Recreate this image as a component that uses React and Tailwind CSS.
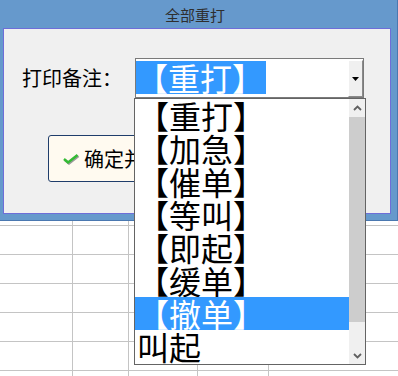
import React from "react";

const items = ["【重打】", "【加急】", "【催单】", "【等叫】", "【即起】", "【缓单】", "【撤单】", "叫起"];

function Chevron({ up }) {
  return (
    <svg width="9" height="6" viewBox="0 0 9 6">
      {up ? (
        <polyline points="1,5 4.5,1.5 8,5" fill="none" stroke="#606060" strokeWidth="1.8" />
      ) : (
        <polyline points="1,1 4.5,4.5 8,1" fill="none" stroke="#606060" strokeWidth="1.8" />
      )}
    </svg>
  );
}

function GridRow({ h, top }) {
  const cols = ["w-[73px]", "w-[56px]", "w-[69px]", "w-[71px]"];
  return (
    <div className={`flex ${h} ${top ? "border-t border-[#c4c4c4]" : ""}`}>
      {cols.map((c, i) => (
        <div key={i} className={`${c} h-full border-r border-[#c4c4c4]`} />
      ))}
    </div>
  );
}

export default function App() {
  return (
    <div className="relative w-[398px] h-[376px] overflow-hidden bg-white font-['Noto_Sans_CJK_SC',sans-serif] text-black">
      {/* dialog window */}
      <div className="bg-[#6699cc] pl-[3px] pr-[6px] pb-[6px] border-r border-b border-[#4a78b0]">
        <div className="h-[28px] flex items-center justify-center pr-[4px] text-[15px] leading-none text-[#2e2e2e]">
          全部重打
        </div>
        <div className="h-[186px] border border-[#6e6ed8] bg-[#f0f0f0] pt-[29px]">
          <div className="flex items-center pl-[18px]">
            <div className="w-[113px] text-[20px] leading-none whitespace-nowrap">打印备注：</div>
            <div className="w-[229px] h-[40px] border border-[#7a7a7a] bg-white flex items-start">
              <div className="mt-[2px] flex-1">
                <span className="inline-block h-[33px] bg-[#3399ff] text-white text-[32px] leading-[33px] pr-[2px] whitespace-nowrap">
                  【重打】
                </span>
              </div>
              <div className="w-[15px] h-[37px] mt-[1px] mr-[0px] bg-[#f0f0f0] border-l border-t border-l-white border-t-white border-r border-b border-r-[#8a8a8a] border-b-[#8a8a8a] flex items-center justify-center">
                <svg width="7" height="4" viewBox="0 0 7 4">
                  <polygon points="0,0 7,0 3.5,4" fill="#000" />
                </svg>
              </div>
            </div>
          </div>
          <div className="mt-[37px] ml-[44px] w-[160px] h-[47px] border border-[#1f3d6b] rounded-[3px] bg-[#fffaf0] flex items-center pl-[14px] gap-[4px]">
            <svg width="17" height="12" viewBox="0 0 17 12">
              <polyline points="2,7 6,10.5 15.5,3" fill="none" stroke="#9a9a9a" strokeWidth="2.4" />
              <polyline points="1,6 5,9.5 14.5,2" fill="none" stroke="#33bb33" strokeWidth="2.4" />
            </svg>
            <span className="text-[20px] leading-none whitespace-nowrap">确定并打印</span>
          </div>
        </div>
      </div>

      {/* spreadsheet grid */}
      <div>
        <GridRow h="h-[4px]" />
        <GridRow h="h-[29px]" top />
        <GridRow h="h-[29px]" top />
        <GridRow h="h-[29px]" top />
        <GridRow h="h-[29px]" top />
        <GridRow h="h-[29px]" top />
        <GridRow h="h-[6px]" top />
      </div>

      {/* dropdown list overlay */}
      <div className="absolute left-[134px] top-[98px] w-[232px] h-[267px] border border-[#646464] bg-white flex">
        <div className="w-[214px] flex flex-col">
          {items.map((t, i) => (
            <div
              key={i}
              className={`h-[33px] text-[32px] leading-[33px] pl-[2px] whitespace-nowrap ${
                i === 6 ? "bg-[#3399ff] text-white" : "text-black"
              }`}
            >
              {t}
            </div>
          ))}
        </div>
        <div className="w-[16px] bg-[#f0f0f0] flex flex-col">
          <div className="h-[18px] flex items-center justify-center">
            <Chevron up />
          </div>
          <div className="h-[205px] bg-[#cdcdcd]" />
          <div className="flex-1" />
          <div className="h-[17px] flex items-center justify-center">
            <Chevron />
          </div>
        </div>
      </div>
    </div>
  );
}
